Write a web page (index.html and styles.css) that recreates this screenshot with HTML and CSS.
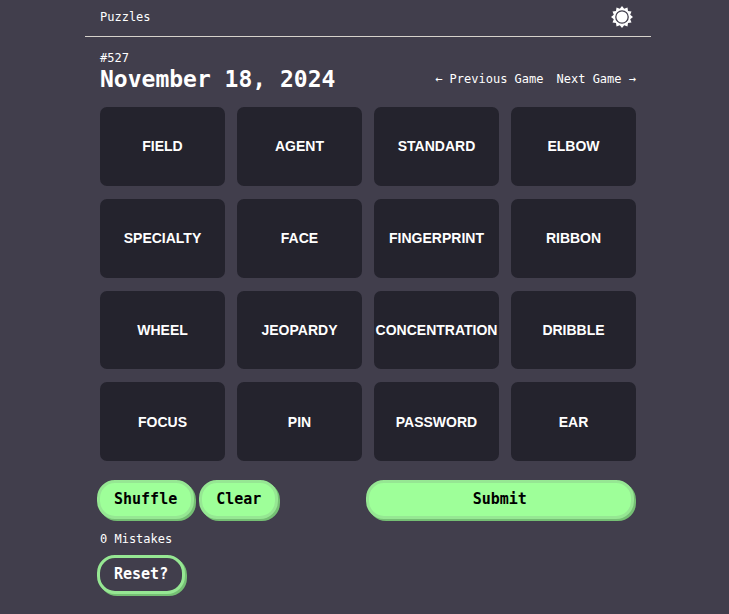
FILE: index.html
```html
<!DOCTYPE html>
<html lang="en">
<head>
<meta charset="utf-8">
<meta name="viewport" content="width=device-width, initial-scale=1">
<title>Puzzles</title>
<link rel="stylesheet" href="styles.css">
</head>
<body>
<div class="page">
  <header class="topbar">
    <a class="link" href="#">Puzzles</a>
    <button class="theme" type="button" aria-label="Toggle theme">
      <svg viewBox="-11 -11 22 22" width="22" height="22" aria-hidden="true">
        <path fill="#fff" d="M0-11L2.200-8.200 5.500-9.500 6-6 9.500-5.500 8.200-2.200 11 0 8.200 2.200 9.500 5.500 6 6 5.500 9.500 2.200 8.200 0 11-2.200 8.200-5.500 9.500-6 6-9.500 5.500-8.200 2.200-11 0-8.200-2.200-9.500-5.500-6-6-5.500-9.500-2.200-8.200z"/>
        <circle r="6.200" fill="#fff" stroke="#413e4c" stroke-width="1.300"/>
      </svg>
    </button>
  </header>
  <main class="game">
    <div class="heading">
      <div>
        <div class="number">#527</div>
        <h1 class="date">November 18, 2024</h1>
      </div>
      <nav class="nav">
        <a class="link" href="#">← Previous Game</a>
        <a class="link" href="#">Next Game →</a>
      </nav>
    </div>
    <div class="board">
      <button class="tile" type="button">FIELD</button>
      <button class="tile" type="button">AGENT</button>
      <button class="tile" type="button">STANDARD</button>
      <button class="tile" type="button">ELBOW</button>
      <button class="tile" type="button">SPECIALTY</button>
      <button class="tile" type="button">FACE</button>
      <button class="tile" type="button">FINGERPRINT</button>
      <button class="tile" type="button">RIBBON</button>
      <button class="tile" type="button">WHEEL</button>
      <button class="tile" type="button">JEOPARDY</button>
      <button class="tile" type="button">CONCENTRATION</button>
      <button class="tile" type="button">DRIBBLE</button>
      <button class="tile" type="button">FOCUS</button>
      <button class="tile" type="button">PIN</button>
      <button class="tile" type="button">PASSWORD</button>
      <button class="tile" type="button">EAR</button>
    </div>
    <div class="controls">
      <button class="btn" type="button">Shuffle</button>
      <button class="btn" type="button">Clear</button>
      <button class="btn btn-submit" type="button">Submit</button>
    </div>
    <p class="mistakes">0 Mistakes</p>
    <div class="controls">
      <button class="btn btn-outline" type="button">Reset?</button>
    </div>
  </main>
</div>
</body>
</html>
```
FILE: styles.css
```css
* {
  box-sizing: border-box;
}

body {
  margin: 0;
  padding-left: 7px;
  background: #413e4c;
  color: #fff;
  font-family: "DejaVu Sans Mono", monospace;
  font-size: 12px;
  line-height: 16px;
}

.page {
  max-width: 566px;
  margin: 0 auto;
}

.topbar {
  display: flex;
  align-items: center;
  justify-content: space-between;
  padding: 6px 18px 8px 15px;
  border-bottom: 1px solid #d6d2cb;
}

.link {
  color: inherit;
  text-decoration: none;
}

.theme {
  display: flex;
  padding: 0;
  border: 0;
  background: none;
}

.game {
  padding: 13px 15px;
}

.heading {
  display: flex;
  align-items: flex-end;
  justify-content: space-between;
}

.date {
  margin: 0;
  font-size: 23px;
  line-height: 26px;
}

.nav {
  display: flex;
  gap: 13px;
  padding-bottom: 5px;
}

.board {
  display: grid;
  grid-template-columns: repeat(4, minmax(0, 1fr));
  grid-template-rows: repeat(4, 1fr);
  gap: 13px 12px;
  min-height: 354px;
  margin: 15px 0 19px;
}

.tile {
  padding: 0;
  border: 0;
  border-radius: 7px;
  background: #24232d;
  color: #fff;
  font: bold 14px/18px "Liberation Sans", Arial, sans-serif;
  white-space: nowrap;
}

.controls {
  display: flex;
  gap: 5px;
  margin: 0 2px 0 -3px;
}

.btn {
  padding: 7px 14px;
  border: 3px solid #96e793;
  border-radius: 18px;
  background: #9eff99;
  box-shadow: 2px 2px 0 #75c074;
  color: #000;
  font: bold 15px/19px "DejaVu Sans Mono", monospace;
}

.btn-submit {
  width: 50%;
  margin-left: auto;
}

.btn-outline {
  background: #413e4c;
  color: #fff;
}

.mistakes {
  margin: 12px 0 8px;
}
```
